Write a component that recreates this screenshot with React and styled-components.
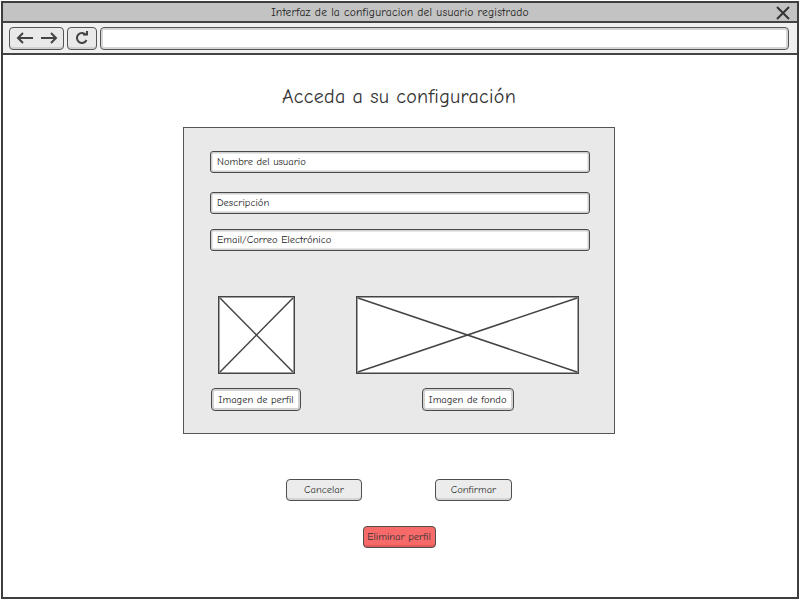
import styled, { createGlobalStyle } from "styled-components";

const GlobalStyle = createGlobalStyle`
  html, body {
    margin: 0;
    padding: 0;
    background: #ffffff;
  }
  * {
    box-sizing: border-box;
  }
`;

const sketchFont = `"Comic Sans MS", "Comic Neue", Lato, "Open Sans", sans-serif`;

const Page = styled.div`
  width: 800px;
  height: 601px;
  padding: 1px 1px 2px 1px;
  font-family: ${sketchFont};
  color: #333;
`;

const Window = styled.div`
  height: 598px;
  border: 2px solid #3d3d3d;
  display: flex;
  flex-direction: column;
  background: #fff;
`;

const TitleBar = styled.div`
  position: relative;
  height: 20px;
  background: #c3c3c3;
  border-bottom: 2px solid #444;
  display: flex;
  align-items: center;
  justify-content: center;
  font-size: 11.5px;
  color: #222;
  letter-spacing: 0.2px;
`;

const CloseIcon = styled.svg`
  position: absolute;
  right: 7px;
  top: 3px;
`;

const Toolbar = styled.div`
  height: 32px;
  background: #f0f0f0;
  border-bottom: 2px solid #444;
  display: flex;
  align-items: center;
  gap: 3px;
  padding: 0 8px 0 6px;
`;

const NavButton = styled.div`
  width: ${(p) => p.$w}px;
  height: 23px;
  border: 1.5px solid #555;
  border-radius: 4px;
  background: #e9e9e9;
  box-shadow: inset 0 -2px 0 #cfcfcf;
  display: flex;
  align-items: center;
  justify-content: center;
  gap: 6px;
`;

const Address = styled.div`
  flex: 1;
  height: 23px;
  border: 1.5px solid #555;
  border-radius: 4px;
  background: #fff;
  box-shadow: inset 0 0 0 2px #d6d6d6;
`;

const Content = styled.div`
  flex: 1;
  display: flex;
  flex-direction: column;
  align-items: center;
  padding-right: 2px;
`;

const Heading = styled.h1`
  margin: 30px 0 0 0;
  font-size: 20px;
  line-height: 24px;
  font-weight: normal;
  color: #333;
  letter-spacing: 0.3px;
`;

const Panel = styled.div`
  width: 432px;
  height: 307px;
  margin-top: 18px;
  border: 1px solid #555;
  background: #e9e9e9;
  padding: 23px 0 0 26px;
  display: flex;
  flex-direction: column;
`;

const Field = styled.div`
  width: 380px;
  height: 22px;
  margin-top: ${(p) => p.$top || 0}px;
  border: 1.5px solid #4a4a4a;
  border-radius: 3px;
  background: #fff;
  box-shadow: inset 0 0 0 1.5px #cfcfcf;
  font-size: 10.5px;
  color: #222;
  display: flex;
  align-items: center;
  padding-left: 6px;
`;

const ImageRow = styled.div`
  display: flex;
  gap: 55px;
  margin-top: 45px;
  padding-left: 1px;
`;

const ImageColumn = styled.div`
  width: ${(p) => p.$w}px;
  display: flex;
  flex-direction: column;
  align-items: center;
  gap: 14px;
`;

const Placeholder = styled.svg`
  display: block;
  background: #fff;
`;

const OutlineButton = styled.div`
  height: 23px;
  width: ${(p) => p.$w}px;
  border: 1.5px solid #4a4a4a;
  border-radius: 4px;
  background: #fff;
  box-shadow: inset 0 0 0 2px #d2d2d2;
  display: flex;
  align-items: center;
  justify-content: center;
  font-size: 10.5px;
  color: #222;
`;

const ActionRow = styled.div`
  display: flex;
  gap: 73px;
  margin-top: 45px;
`;

const ActionButton = styled.div`
  width: ${(p) => p.$w}px;
  height: 22px;
  border: 1.5px solid #4f4f4f;
  border-radius: 4px;
  background: ${(p) => (p.$danger ? "#f66a6a" : "#ececec")};
  box-shadow: inset 0 -2px 0 ${(p) => (p.$danger ? "#e55858" : "#d4d4d4")};
  display: flex;
  align-items: center;
  justify-content: center;
  font-size: 10.5px;
  color: #333;
  margin-top: ${(p) => p.$top || 0}px;
`;

const ImageBox = ({ w, h }) => (
  <Placeholder width={w} height={h} viewBox={`0 0 ${w} ${h}`}>
    <rect x="0.75" y="0.75" width={w - 1.5} height={h - 1.5} fill="#fff" stroke="#444" strokeWidth="1.5" />
    <line x1="2" y1="2" x2={w - 2} y2={h - 2} stroke="#444" strokeWidth="1.5" />
    <line x1={w - 2} y1="2" x2="2" y2={h - 2} stroke="#444" strokeWidth="1.5" />
  </Placeholder>
);

const App = () => {
  return (
    <Page>
      <GlobalStyle />
      <Window>
        <TitleBar>
          Interfaz de la configuracion del usuario registrado
          <CloseIcon width="14" height="14" viewBox="0 0 14 14">
            <path d="M1 1 L13 13 M13 1 L1 13" stroke="#333" strokeWidth="2" fill="none" />
          </CloseIcon>
        </TitleBar>
        <Toolbar>
          <NavButton $w={55}>
            <svg width="18" height="12" viewBox="0 0 18 12">
              <path d="M17 6 H2 M7 1 L2 6 L7 11" stroke="#444" strokeWidth="2" fill="none" />
            </svg>
            <svg width="18" height="12" viewBox="0 0 18 12">
              <path d="M1 6 H16 M11 1 L16 6 L11 11" stroke="#444" strokeWidth="2" fill="none" />
            </svg>
          </NavButton>
          <NavButton $w={30}>
            <svg width="14" height="14" viewBox="0 0 14 14">
              <path d="M11 4 A5 5 0 1 0 11.5 9" stroke="#444" strokeWidth="2" fill="none" />
              <path d="M8 3.5 L12 3.5 L12 0" stroke="#444" strokeWidth="2" fill="none" />
            </svg>
          </NavButton>
          <Address />
        </Toolbar>
        <Content>
          <Heading>Acceda a su configuración</Heading>
          <Panel>
            <Field>Nombre del usuario</Field>
            <Field $top={19}>Descripción</Field>
            <Field $top={15}>Email/Correo Electrónico</Field>
            <ImageRow>
              <ImageColumn $w={90}>
                <ImageBox w={77} h={78} />
                <OutlineButton $w={90}>Imagen de perfil</OutlineButton>
              </ImageColumn>
              <ImageColumn $w={223}>
                <ImageBox w={223} h={78} />
                <OutlineButton $w={92}>Imagen de fondo</OutlineButton>
              </ImageColumn>
            </ImageRow>
          </Panel>
          <ActionRow>
            <ActionButton $w={76}>Cancelar</ActionButton>
            <ActionButton $w={77}>Confirmar</ActionButton>
          </ActionRow>
          <ActionButton $w={73} $top={25} $danger>
            Eliminar perfil
          </ActionButton>
        </Content>
      </Window>
    </Page>
  );
};

export default App;
